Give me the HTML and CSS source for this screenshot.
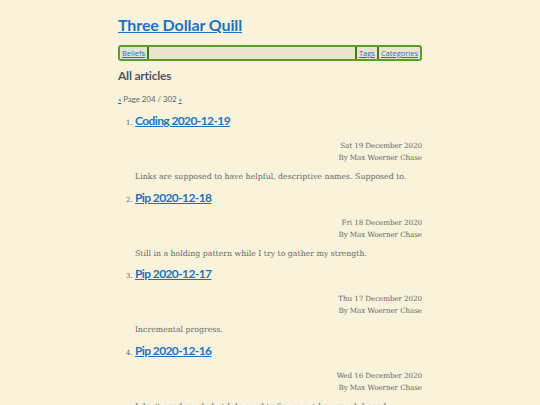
FILE: index.html
```html
<!DOCTYPE html>
<html lang="en">
<head>
<meta charset="UTF-8" />
<meta name="viewport" content="width=device-width, initial-scale=1" />
<title>All articles - Three Dollar Quill</title>
<link rel="stylesheet" href="styles.css">
</head>
<body>

<div class="page">
  <header>
    <h1 class="site-title"><a href="#">Three Dollar Quill</a></h1>
    <nav class="menu">
      <a href="#" class="current">Beliefs</a>
      <span class="gap"></span>
      <a href="#">Tags</a>
      <a href="#">Categories</a>
    </nav>
  </header>

  <main>
    <h2>All articles</h2>
    <p class="pager"><a href="#">«</a> Page 204 / 302 <a href="#">»</a></p>

    <ol class="articles" start="1">
      <li>
        <h3><a href="#">Coding 2020-12-19</a></h3>
        <div class="meta">
          <div>Sat 19 December 2020</div>
          <div>By Max Woerner Chase</div>
        </div>
        <p class="summary">Links are supposed to have helpful, descriptive names. Supposed to.</p>
      </li>
      <li>
        <h3><a href="#">Pip 2020-12-18</a></h3>
        <div class="meta">
          <div>Fri 18 December 2020</div>
          <div>By Max Woerner Chase</div>
        </div>
        <p class="summary">Still in a holding pattern while I try to gather my strength.</p>
      </li>
      <li>
        <h3><a href="#">Pip 2020-12-17</a></h3>
        <div class="meta">
          <div>Thu 17 December 2020</div>
          <div>By Max Woerner Chase</div>
        </div>
        <p class="summary">Incremental progress.</p>
      </li>
      <li>
        <h3><a href="#">Pip 2020-12-16</a></h3>
        <div class="meta">
          <div>Wed 16 December 2020</div>
          <div>By Max Woerner Chase</div>
        </div>
        <p class="summary">I don't need much, but I do need to figure out how much I need.</p>
      </li>
    </ol>
  </main>
</div>

</body>
</html>
```

FILE: styles.css
```css
body {
  margin: 0;
  background: #faf3dc;
  color: #666;
  font-family: "DejaVu Serif", serif;
}

a {
  color: #1c72c2;
}

.page {
  width: 304px;
  margin: 0 auto;
  padding-top: 15px;
}

h1, h2, h3, .pager {
  font-family: Lato, sans-serif;
}

.site-title {
  margin: 0 0 10px;
  font-size: 16px;
  line-height: 20px;
  font-weight: 700;
  letter-spacing: -0.1px;
}

/* barra de navegacao */
.menu {
  display: flex;
  height: 12px;
  background: #ebe4cf;
  border: 2px solid #5e9a25;
  border-radius: 3px;
  font-family: "Open Sans", sans-serif;
  font-size: 7.5px;
  line-height: 12px;
}

.menu a,
.menu .gap {
  padding: 0 2px;
  border-left: 2px solid #3f7d12;
}

.menu a.current {
  border-left: none;
  background: #e3e3d6;
}

.menu .gap {
  flex: 1;
}

h2 {
  margin: 7px 0 0;
  font-size: 12px;
  line-height: 16px;
  letter-spacing: -0.2px;
  color: #4f575a;
}

.pager {
  margin: 9px 0 0;
  font-size: 8px;
  line-height: 12px;
  letter-spacing: -0.1px;
  color: #666;
}

.articles {
  margin: 8px 0 0;
  padding-left: 17px;
}

.articles li::marker {
  font-size: 7px;
  color: #666;
}

.articles h3 {
  margin: 0;
  font-size: 12px;
  line-height: 16px;
  letter-spacing: -0.6px;
}

.meta {
  margin-top: 11px;
  text-align: right;
  font-size: 7.2px;
  line-height: 12px;
  letter-spacing: -0.1px;
}

.summary {
  margin: 7px 0 6.7px;
  font-size: 7.8px;
  line-height: 12px;
}
```
